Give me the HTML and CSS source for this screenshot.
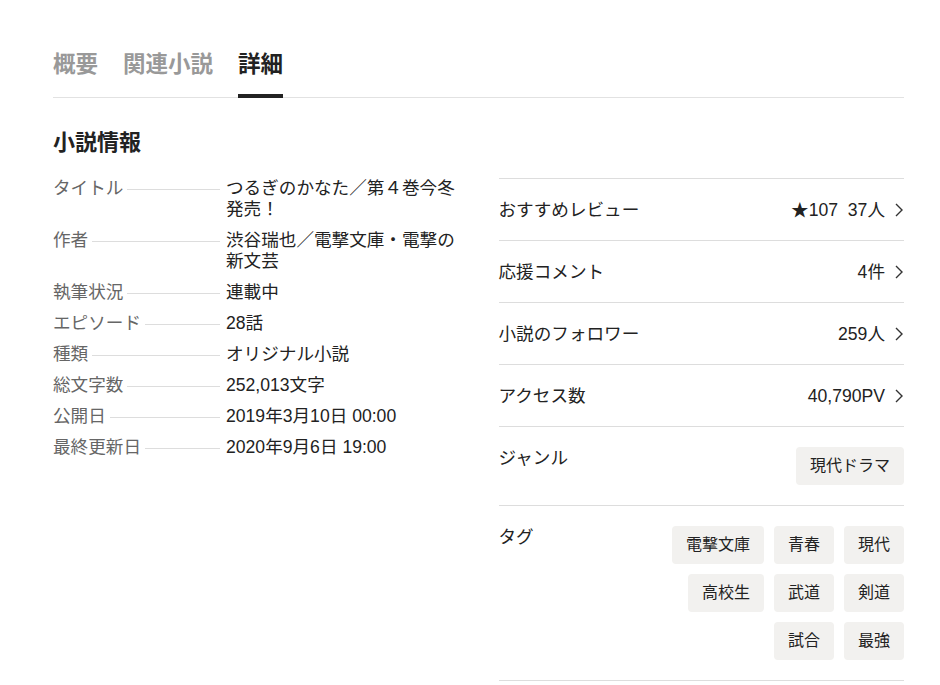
FILE: index.html
```html
<!DOCTYPE html>
<html lang="ja">
<head>
    <meta charset="UTF-8">
    <title>詳細</title>
    <link rel="stylesheet" href="styles.css">
</head>
<body>
    <div class="page">
        <nav class="tabs">
            <a href="#" class="tab">概要</a>
            <a href="#" class="tab">関連小説</a>
            <a href="#" class="tab active">詳細</a>
        </nav>

        <h2 class="section-title">小説情報</h2>

        <div class="detail">
            <dl class="info">
                <div class="info-row"><dt><span>タイトル</span></dt><dd>つるぎのかなた／第４巻今冬発売！</dd></div>
                <div class="info-row"><dt><span>作者</span></dt><dd>渋谷瑞也／電撃文庫・電撃の新文芸</dd></div>
                <div class="info-row"><dt><span>執筆状況</span></dt><dd>連載中</dd></div>
                <div class="info-row"><dt><span>エピソード</span></dt><dd>28話</dd></div>
                <div class="info-row"><dt><span>種類</span></dt><dd>オリジナル小説</dd></div>
                <div class="info-row"><dt><span>総文字数</span></dt><dd>252,013文字</dd></div>
                <div class="info-row"><dt><span>公開日</span></dt><dd>2019年3月10日 00:00</dd></div>
                <div class="info-row"><dt><span>最終更新日</span></dt><dd>2020年9月6日 19:00</dd></div>
            </dl>

            <ul class="stats">
                <li class="stat link">
                    <span class="stat-label">おすすめレビュー</span>
                    <span class="stat-value">★107&nbsp;&nbsp;37人</span>
                    <svg class="chev" viewBox="0 0 8 14" width="8" height="14"><path d="M1 1l6 6-6 6" fill="none" stroke="#333" stroke-width="1.4"/></svg>
                </li>
                <li class="stat link">
                    <span class="stat-label">応援コメント</span>
                    <span class="stat-value">4件</span>
                    <svg class="chev" viewBox="0 0 8 14" width="8" height="14"><path d="M1 1l6 6-6 6" fill="none" stroke="#333" stroke-width="1.4"/></svg>
                </li>
                <li class="stat link">
                    <span class="stat-label">小説のフォロワー</span>
                    <span class="stat-value">259人</span>
                    <svg class="chev" viewBox="0 0 8 14" width="8" height="14"><path d="M1 1l6 6-6 6" fill="none" stroke="#333" stroke-width="1.4"/></svg>
                </li>
                <li class="stat link">
                    <span class="stat-label">アクセス数</span>
                    <span class="stat-value">40,790PV</span>
                    <svg class="chev" viewBox="0 0 8 14" width="8" height="14"><path d="M1 1l6 6-6 6" fill="none" stroke="#333" stroke-width="1.4"/></svg>
                </li>
                <li class="stat block">
                    <span class="stat-label">ジャンル</span>
                    <div class="tags">
                        <a href="#" class="tag">現代ドラマ</a>
                    </div>
                </li>
                <li class="stat block">
                    <span class="stat-label">タグ</span>
                    <div class="tags">
                        <a href="#" class="tag">電撃文庫</a>
                        <a href="#" class="tag">青春</a>
                        <a href="#" class="tag">現代</a>
                        <a href="#" class="tag">高校生</a>
                        <a href="#" class="tag">武道</a>
                        <a href="#" class="tag">剣道</a>
                        <a href="#" class="tag">試合</a>
                        <a href="#" class="tag">最強</a>
                    </div>
                </li>
            </ul>
        </div>
    </div>
</body>
</html>
```

FILE: styles.css
```css
* { margin: 0; padding: 0; box-sizing: border-box; }
body {
    font-family: "Liberation Sans", "Noto Sans CJK JP", sans-serif;
    color: #222;
    background: #fff;
}
a { text-decoration: none; color: inherit; }
.page {
    width: 851px;
    margin-left: 53px;
    padding-top: 49px;
}

/* tabs */
.tabs {
    display: flex;
    gap: 25px;
    border-bottom: 1px solid #e2e2e2;
}
.tab {
    font-size: 22.5px;
    font-weight: bold;
    color: #999;
    line-height: 32px;
    padding-bottom: 13px;
    border-bottom: 4px solid transparent;
    margin-bottom: -1px;
}
.tab.active {
    color: #222;
    border-bottom-color: #222;
}

.section-title {
    font-size: 22px;
    font-weight: bold;
    line-height: 28px;
    margin-top: 31px;
}

.detail {
    display: grid;
    grid-template-columns: 1fr 1fr;
    gap: 40px;
    margin-top: 21px;
}

/* left list */
.info {
    font-size: 17.6px;
    line-height: 21px;
    display: flex;
    flex-direction: column;
    gap: 10px;
}
.info-row {
    display: flex;
}
.info-row dt {
    width: 173px;
    flex-shrink: 0;
    color: #666;
    display: flex;
    align-items: flex-start;
    padding-right: 6px;
}
.info-row dt::after {
    content: "";
    flex: 1;
    height: 1px;
    background: #ddd;
    margin: 11px 0 0 4px;
}
.info-row dd {
    flex: 1;
    min-width: 0;
}

/* right list */
.stats {
    list-style: none;
    border-top: 1px solid #ddd;
    font-size: 17.6px;
}
.stat {
    border-bottom: 1px solid #ddd;
    display: flex;
}
.stat.link {
    height: 62px;
    align-items: center;
}
.stat-label { flex: 1; line-height: 22px; }
.stat-value { line-height: 22px; }
.chev { margin-left: 10px; margin-right: 1px; }
.stat.block {
    padding: 20px 0;
    align-items: flex-start;
}
.tags {
    display: flex;
    flex-wrap: wrap;
    justify-content: flex-end;
    gap: 10px;
    max-width: 240px;
}
.tag {
    font-size: 16px;
    line-height: 38px;
    padding: 0 14px;
    background: #f2f1ef;
    border-radius: 4px;
    color: #222;
}
```
